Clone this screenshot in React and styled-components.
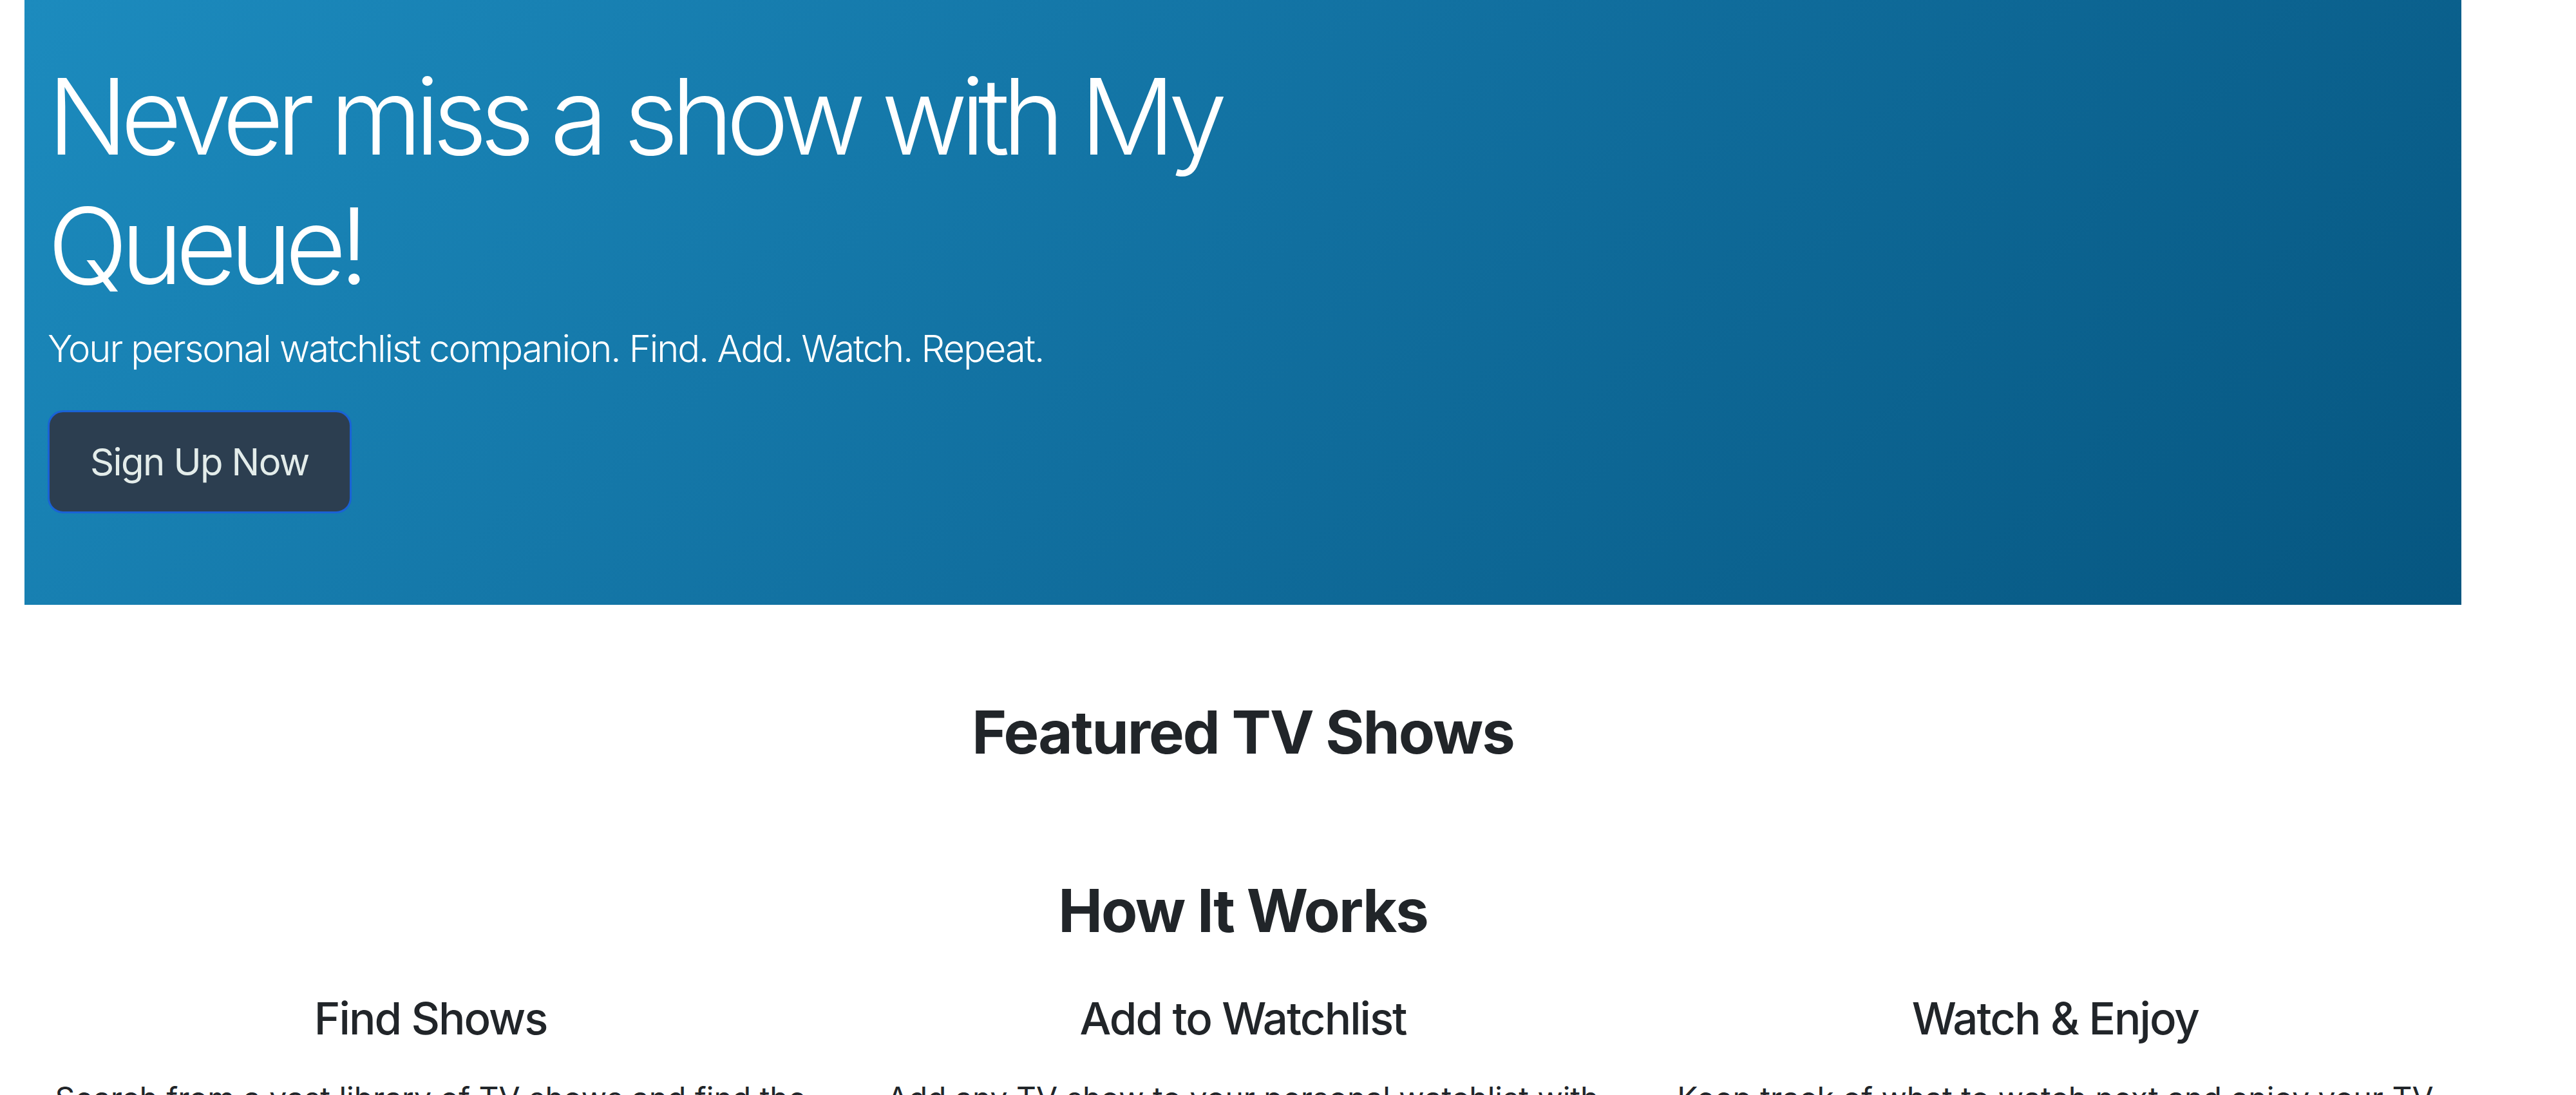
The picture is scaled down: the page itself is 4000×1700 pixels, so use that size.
import React from 'react';
import styled, { createGlobalStyle } from 'styled-components';

const GlobalStyle = createGlobalStyle`
  * {
    box-sizing: border-box;
  }

  body {
    margin: 0;
    background: #ffffff;
    font-family: Inter, "Noto Sans", "Liberation Sans", sans-serif;
    color: #212529;
  }
`;

const steps = [
  {
    title: 'Find Shows',
    text: 'Search from a vast library of TV shows and find the ones you love to watch.',
  },
  {
    title: 'Add to Watchlist',
    text: 'Add any TV show to your personal watchlist with just one click.',
  },
  {
    title: 'Watch & Enjoy',
    text: 'Keep track of what to watch next and enjoy your TV time without missing a show.',
  },
];

const App = () => {
  return (
    <>
      <GlobalStyle />
      <StyledPage>
        <StyledHero>
          <StyledHeroTitle>Never miss a show with My Queue!</StyledHeroTitle>
          <StyledLead>Your personal watchlist companion. Find. Add. Watch. Repeat.</StyledLead>
          <StyledButton type="button">Sign Up Now</StyledButton>
        </StyledHero>

        <StyledSection $top={143}>
          <StyledSectionTitle>Featured TV Shows</StyledSectionTitle>
        </StyledSection>

        <StyledSection $top={167}>
          <StyledSectionTitle>How It Works</StyledSectionTitle>
          <StyledSteps>
            {steps.map((step) => (
              <StyledStep key={step.title}>
                <StyledStepTitle>{step.title}</StyledStepTitle>
                <StyledStepText>{step.text}</StyledStepText>
              </StyledStep>
            ))}
          </StyledSteps>
        </StyledSection>
      </StyledPage>
    </>
  );
};

export default App;

const StyledPage = styled.div`
  width: 3784px;
  margin-left: 38px;
`;

const StyledHero = styled.header`
  display: flex;
  flex-direction: column;
  align-items: flex-start;
  padding: 80px 36px 142px;
  background: linear-gradient(135deg, #1c8bbe 0%, #116f9f 50%, #065680 100%);
  color: #ffffff;
`;

const StyledHeroTitle = styled.h1`
  max-width: 2000px;
  margin: 0;
  font-size: 164px;
  font-weight: 300;
  line-height: 201px;
  letter-spacing: -11px;
`;

const StyledLead = styled.p`
  margin: 16px 0 52px;
  font-size: 58px;
  font-weight: 300;
  line-height: 87px;
  letter-spacing: -2.1px;
`;

const StyledButton = styled.button`
  display: inline-flex;
  align-items: center;
  height: 160px;
  padding: 0 63px;
  border: 3px solid #1a62d6;
  border-radius: 24px;
  background: #2c3e50;
  color: #e3ecea;
  font-family: inherit;
  font-size: 58px;
  font-weight: 400;
  line-height: 1;
  letter-spacing: -1.6px;
`;

const StyledSection = styled.section`
  margin-top: ${(props) => props.$top}px;
  text-align: center;
`;

const StyledSectionTitle = styled.h2`
  margin: 0;
  font-size: 92px;
  font-weight: 700;
  line-height: 110px;
  letter-spacing: -2px;
  color: #212529;
`;

const StyledSteps = styled.div`
  display: grid;
  grid-template-columns: repeat(3, 1fr);
  margin-top: 71px;
`;

const StyledStep = styled.div`
  padding: 0 36px;
  text-align: center;
`;

const StyledStepTitle = styled.h3`
  margin: 0 0 46px;
  font-size: 69px;
  font-weight: 500;
  line-height: 83px;
  letter-spacing: -2px;
  color: #212529;
`;

const StyledStepText = styled.p`
  margin: 0;
  font-size: 48px;
  line-height: 72px;
  color: #212529;
`;
